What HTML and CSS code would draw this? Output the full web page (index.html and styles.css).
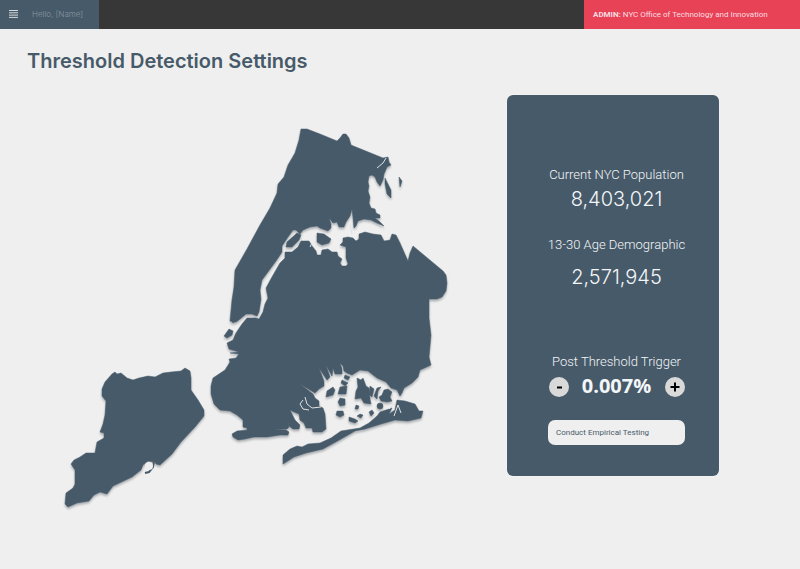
FILE: index.html
```html
<!DOCTYPE html>
<html lang="en">
<head>
<meta charset="utf-8">
<meta name="viewport" content="width=device-width, initial-scale=1">
<title>Threshold Detection Settings</title>
<link rel="stylesheet" href="styles.css">
</head>
<body>
<header class="topbar">
  <div class="user">
    <button class="menu" type="button" aria-label="Menu">
      <svg viewBox="0 0 9 8" width="9" height="8" aria-hidden="true"><path d="M0 .5h9M0 2.8h9M0 5.1h9M0 7.4h9"/></svg>
    </button>
    <span class="greeting">Hello, [Name]</span>
  </div>
  <p class="admin"><strong>ADMIN:</strong> NYC Office of Technology and Innovation</p>
</header>
<main class="page">
  <h1>Threshold Detection Settings</h1>
  <div class="content">
    <svg class="map" viewBox="27 95 460 425" role="img" aria-label="Map of New York City">
      <g class="land">
        <!-- Bronx and Manhattan -->
        <path d="M301 129L307 129L320 134L337 141L340 138L343 134L346 134L349 138L351 145L383 158L388 157L389 162L391 165L387 167L384 174L383 180L380 186L377 182L375 177L372 175L369 176L368 182L369 186L368 191L370 197L369 203L371 208L375 209L376 213L380 215L380 218L375 218L380 222L384 226L377 223L371 220L364 219L358 221L356 226L354 228L353 218L352 209L350 216L346 222L344 227L339 227L337 222L333 223L329 218L331 224L331 228L328 231L320 228L317 226L310 227L303 230L300 234L296 230L293 230L288 237L282 246L282 252L276 261L262 280L260 290L261 299L259 312L257 316L252 314L246 314L240 319L236 322L230 321L232 300L234 287L235 270L247 249L260 225L270 208L277 193L278 184L284 177L288 165L295 153L299 140Z"/>
        <!-- Brooklyn and Queens -->
        <path d="M303 241L309 241L312 246L316 251L317 255L321 255L322 250L328 249L332 252L337 252L338 256L342 259L340 263L342 266L346 266L348 264L346 258L346 247L340 245L343 242L343 238L348 237L353 238L356 241L359 239L359 234L365 232L373 234L381 235L384 241L390 240L392 234L396 235L400 243L408 261L410 253L413 246L443 271L446 275L447 283L446 291L442 297L437 299L429 299L429 318L431 335L429 357L431 365L420 370L418 377L412 383L404 388L402 393L400 396L397 390L391 388L386 382L377 378L368 371L360 370L352 375L347 373L344 371L343 366L340 363L342 369L342 374L335 374L333 368L332 376L326 365L330 377L327 380L319 368L324 381L324 386L319 389L315 393L300 384L313 394L315 398L319 401L319 406L323 408L325 414L326 429L322 432L313 432L312 428L306 428L304 423L300 420L299 414L294 412L290 410L295 420L300 425L299 429L293 429L289 426L287 418L289 427L287 429L274 429L286 430L289 432L288 435L280 435L267 437L254 437L245 439L238 440L233 437L232 434L237 431L247 430L247 428L243 427L243 420L237 415L230 411L220 410L214 404L211 394L211 386L213 378L225 370L230 362L229 359L236 358L239 354L230 353L239 352L229 349L227 343L233 340L236 333L242 324L247 318L256 318L259 319L263 312L265 304L268 298L266 288L272 277L280 263L285 258L285 252L292 252L298 247L301 241Z"/>
        <!-- Staten Island -->
        <path d="M115 372L117 374L121 373L127 378L133 380L139 378L148 376L155 377L163 373L171 372L181 371L185 368L190 371L191 378L191 390L198 400L204 410L204 416L195 427L181 442L172 454L160 465L156 464L155 462L148 461L143 465L141 470L132 477L113 486L107 494L100 492L94 495L89 501L77 503L68 507L65 504L66 493L73 488L75 484L75 470L71 464L74 460L80 457L86 453L95 453L97 442L104 438L104 433L100 432L103 424L105 415L106 401L102 396L102 389L105 382L112 374Z"/>
        <!-- Rockaway -->
        <path d="M283 464L283 455L290 449L297 446L302 447L308 444L320 443L331 438L341 431L360 428L369 423L377 416L380 412L392 408L389 414L395 410L397 400L405 401L415 404L419 411L423 411L421 418L408 421L395 420L381 424L365 429L355 431L341 439L323 449L306 453L294 457Z"/>
        <!-- Smaller islands -->
        <path d="M297 233L301 235L299 240L292 247L286 247L287 242Z"/>
        <path d="M317 233L324 234L331 239L329 243L322 245L317 242Z"/>
        <path d="M385 178L388 184L391 190L391 198L387 194L385 184ZM399 177L402 181L400 187ZM229 329L233 331L232 335L227 338L224 336ZM231 320L237 320L233 323Z"/>
        <path d="M327 391L333 387L335 390L333 395L326 397ZM340 387L347 386L346 394L338 394ZM342 380L348 383L345 386L341 383ZM345 375L350 377L348 380L344 378Z"/>
        <path d="M357 378L361 380L363 378L366 386L369 388L370 399L371 404L364 403L361 398L355 399L356 391L358 387ZM384 390L388 389L392 392L390 397L392 401L387 402L381 401L379 397L382 395Z"/>
        <path d="M340 398L345 399L345 405L340 406L338 402ZM337 411L343 411L344 415L340 417L336 415ZM349 417L355 419L358 421L355 423L349 421ZM356 405L359 406L358 409L355 409ZM360 414L363 415L361 418L357 416ZM372 410L374 413L371 416L369 412Z"/>
        <path d="M370 386L374 389L372 397L369 394ZM377 388L381 387L378 391L377 399L374 396Z"/>
        <circle cx="380" cy="406" r="3"/>
      </g>
      <!-- Creeks and inlets -->
      <g class="water">
        <path d="M386 158L383 163L377 168M305 397L307 404L312 408L321 407M303 400L300 404L303 409L309 410M389 409L396 402M394 416L398 405L401 413"/>
        <path d="M310 247L312 243M350 224L352 234"/>
      </g>
      <path class="spit" d="M154 461L153 467L149 472L145 473"/>
      <ellipse class="cove" cx="149" cy="466" rx="4" ry="4"/>
    </svg>

    <section class="card" aria-label="Threshold figures">
      <dl class="stats">
        <div class="stat">
          <dt>Current NYC Population</dt>
          <dd>8,403,021</dd>
        </div>
        <div class="stat stat-wide">
          <dt>13-30 Age Demographic</dt>
          <dd>2,571,945</dd>
        </div>
      </dl>
      <h2>Post Threshold Trigger</h2>
      <div class="stepper">
        <button class="round" type="button" aria-label="Decrease"><svg viewBox="0 0 20 20" aria-hidden="true"><path d="M8 10.500h5"/></svg></button>
        <output class="value">0.007%</output>
        <button class="round" type="button" aria-label="Increase"><svg viewBox="0 0 20 20" aria-hidden="true"><path d="M5.500 10h9M10 5.500v9"/></svg></button>
      </div>
      <button class="test" type="button">Conduct Empirical Testing</button>
    </section>
  </div>
</main>
</body>
</html>
```
FILE: styles.css
```css
* { box-sizing: border-box; }

body {
  margin: 0;
  min-height: 100vh;
  background: #efefef;
  color: #475a69;
  font-family: Inter, "Liberation Sans", sans-serif;
}

h1, h2, p, dl, dd { margin: 0; }

button {
  border: 0;
  padding: 0;
  font-family: inherit;
  cursor: pointer;
}

.topbar {
  display: flex;
  justify-content: space-between;
  height: 29px;
  background: #373737;
}

.user {
  display: flex;
  align-items: center;
  gap: 14px;
  width: 99px;
  padding: 0 9px 2px;
  background: #475a69;
}

.menu {
  display: flex;
  background: none;
}

.menu path {
  stroke: #d5dade;
  stroke-width: 1;
}

.greeting {
  color: #8a97a1;
  font-size: 8px;
  font-weight: 300;
  white-space: nowrap;
}

.admin {
  width: 27%;
  padding-left: 9px;
  background: #e84256;
  color: #fbdde0;
  font-family: Roboto, "Liberation Sans", sans-serif;
  font-size: 8px;
  line-height: 30px;
  white-space: nowrap;
}

.page { padding: 19px 81px 32px 27px; }

h1 {
  font-size: 20px;
  font-weight: 600;
  line-height: 27px;
}

.content {
  display: grid;
  grid-template-columns: minmax(0, 1fr) 212px;
  gap: 20px;
  align-items: start;
  margin-top: 20px;
}

.map {
  display: block;
  width: 100%;
}

.land {
  fill: #475a69;
  stroke: #475a69;
  stroke-width: 0.5;
  stroke-linejoin: round;
  filter: drop-shadow(0 2px 1px rgba(40, 50, 60, 0.35));
}

.water {
  fill: none;
  stroke: #dfe2e5;
  stroke-width: 1;
}

.spit {
  fill: none;
  stroke: #475a69;
  stroke-width: 2;
}

.cove { fill: #efefef; }

.card {
  display: flex;
  flex-direction: column;
  align-items: center;
  padding: 70px 32px 31px 39px;
  border-radius: 6px;
  background: #475a69;
  color: #f3f6f8;
  box-shadow: 0 0 2px #fff;
}

.stats {
  display: flex;
  flex-direction: column;
  gap: 22px;
  text-align: center;
}

.stat {
  display: flex;
  flex-direction: column;
}

.stat-wide { gap: 8px; }

dt, h2 {
  font-family: Roboto, "Liberation Sans", sans-serif;
  font-size: 13px;
  font-weight: 300;
  line-height: 20px;
  white-space: nowrap;
}

dd {
  font-size: 20px;
  font-weight: 300;
  line-height: 28px;
}

h2 { margin-top: 61px; }

.stepper {
  display: flex;
  align-items: center;
  justify-content: space-between;
  width: 136px;
  height: 30px;
}

.round {
  width: 20px;
  height: 20px;
  border-radius: 50%;
  background: #d9d9d9;
}

.round svg { display: block; }

.round path {
  fill: none;
  stroke: #000;
  stroke-width: 2;
}

.value {
  font-family: "Open Sans", "Noto Sans", sans-serif;
  font-size: 20px;
  font-weight: 700;
  line-height: 28px;
  padding-bottom: 2px;
}

.test {
  width: 137px;
  height: 25px;
  margin-top: 18px;
  padding-left: 8px;
  border-radius: 7px;
  background: #efefef;
  color: #475a69;
  font-family: Roboto, "Liberation Sans", sans-serif;
  font-size: 8px;
  text-align: left;
}
```
